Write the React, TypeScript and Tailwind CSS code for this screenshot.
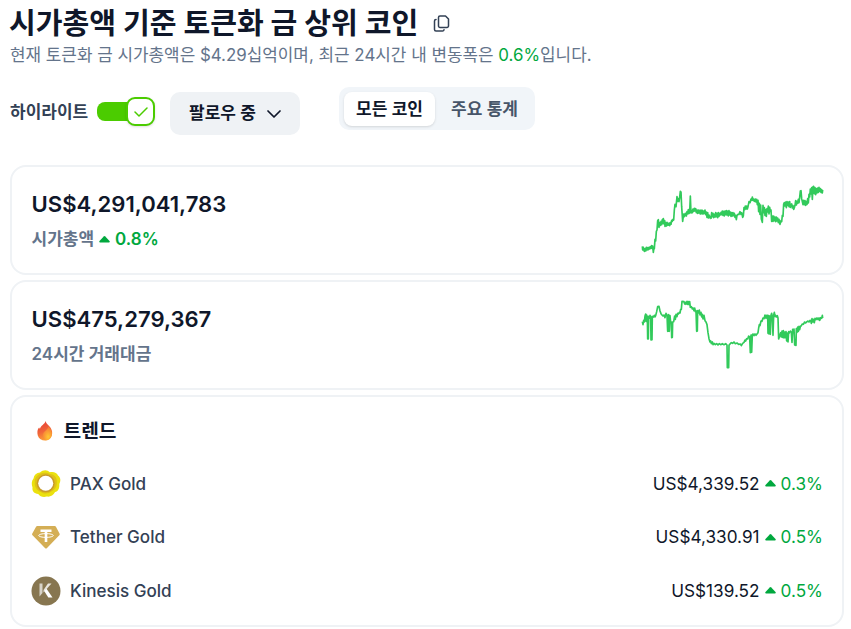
import { ReactNode } from 'react';

const MARKET_CAP_POINTS =
  '37,259 38,270 40,262 43,274 45,266 47,273 49,262 51,270 53,263 55,269 57,262 59,267 61,260 63,265 65,257 67,266 68,258 70,277 72,262 73,266 75,238 77,243 79,214 81,210 83,182 85,179 87,202 89,188 91,196 93,184 95,194 97,179 98,190 100,176 102,192 104,182 105,199 107,188 109,198 111,187 114,196 117,189 119,197 121,188 123,193 125,181 127,184 129,178 131,180 133,150 135,133 138,140 141,110 143,124 145,116 147,125 149,112 151,94 153,96 155,140 158,184 161,162 163,170 166,160 169,168 171,155 173,162 175,149 177,160 179,158 181,108 183,159 185,152 187,158 189,147 191,154 193,145 195,153 197,146 199,158 201,150 203,160 205,150 207,159 209,151 211,162 213,150 215,161 217,151 219,162 221,153 223,160 225,150 227,164 229,156 231,172 233,158 235,174 237,165 239,173 241,170 243,175 245,158 247,170 249,160 251,173 253,163 255,171 257,158 259,170 261,160 263,173 265,158 267,169 269,160 271,165 273,157 275,164 277,153 279,166 281,154 283,168 285,153 287,164 289,152 291,165 293,153 295,168 297,152 299,165 301,156 303,169 305,158 307,168 309,158 311,167 313,160 315,172 317,166 319,179 321,166 324,163 327,163 330,155 333,163 335,158 338,172 340,168 342,143 344,149 346,138 348,147 350,138 352,147 354,140 357,125 360,128 363,117 365,121 367,111 369,121 371,117 373,124 376,117 378,126 380,118 382,134 384,121 386,155 388,130 390,163 392,135 394,177 397,187 399,136 401,158 403,143 405,166 407,149 409,169 411,146 413,156 415,138 417,162 419,142 421,154 423,150 425,184 427,168 429,184 431,168 433,182 435,171 437,185 439,171 441,183 443,174 445,188 447,178 450,193 453,182 455,185 457,166 459,169 461,132 463,128 465,138 467,126 469,143 471,125 473,136 475,126 477,140 479,125 481,142 483,135 485,132 487,144 489,137 491,148 493,143 495,136 497,122 499,135 501,124 503,130 505,118 507,128 509,112 511,93 513,92 515,116 517,125 519,134 521,121 523,134 525,122 527,136 529,125 531,133 533,116 535,129 537,103 539,111 541,87 543,102 545,83 547,118 549,80 551,79 553,101 555,83 557,104 559,86 561,99 563,84 565,97 567,82 569,94 571,86 573,97 575,89 577,99 578,90';

const VOLUME_POINTS =
  '37,125 39,134 41,121 43,126 45,108 47,102 48,124 50,105 52,111 53,177 55,177 56,109 58,115 60,106 62,110 63,180 66,179 67,109 70,111 73,106 75,111 77,107 80,95 83,80 87,79 90,93 93,101 96,105 99,108 102,105 105,113 108,100 111,105 113,154 115,153 116,104 118,154 120,107 122,128 124,126 125,173 127,172 128,126 131,125 134,108 136,118 138,103 141,110 143,100 145,102 148,97 150,99 152,88 154,88 156,64 162,65 164,72 166,67 168,73 171,64 173,73 175,65 177,74 179,65 181,82 184,80 187,87 189,84 192,92 194,84 196,95 198,92 200,154 202,153 203,92 206,99 208,90 210,105 213,97 215,111 217,103 219,117 222,106 225,122 228,126 231,134 234,158 237,176 240,186 242,183 244,191 247,186 249,194 252,190 256,194 260,191 264,195 268,191 272,194 277,191 282,194 287,191 291,195 292,263 296,263 297,196 300,192 304,188 308,190 312,186 316,191 321,189 326,193 331,192 334,197 338,190 342,187 345,180 347,183 350,176 353,177 356,168 359,171 361,218 363,165 365,217 367,164 369,162 372,167 375,162 378,166 381,162 384,158 386,144 388,134 390,137 393,123 396,124 399,114 402,116 405,105 408,115 410,106 413,106 414,160 416,107 417,162 419,108 421,163 423,106 425,100 427,112 429,166 431,105 433,97 435,109 437,106 439,111 442,107 444,114 446,177 449,167 452,158 454,171 456,153 458,172 460,152 462,174 464,156 466,173 468,155 470,183 472,159 474,186 476,155 478,159 481,153 484,157 486,187 488,148 490,158 492,147 494,195 498,196 499,146 501,157 503,141 505,154 507,139 509,149 511,140 514,137 517,132 520,133 524,126 527,129 531,125 534,123 537,126 540,121 542,122 544,130 546,116 548,126 550,118 553,128 555,115 558,119 561,114 564,119 567,114 569,121 572,113 575,115 577,106 578,114';

function Sparkline({ points }: { points: string }) {
  return (
    <svg className="h-[70px] w-[181px] shrink-0 overflow-visible" viewBox="36 60 543 210" fill="none">
      <polyline points={points} stroke="#32ca5b" strokeWidth="5" strokeLinejoin="round" />
    </svg>
  );
}

function CaretUp() {
  return (
    <svg className="h-[7px] w-[11px] shrink-0" viewBox="0 0 11 7" fill="#00a83e">
      <path d="M4.7.4a1.2 1.2 0 0 1 1.6 0l4.2 4.5c.6.7.3 1.6-.6 1.6H1.1C.2 6.5-.1 5.6.5 4.9z" />
    </svg>
  );
}

function FlameIcon() {
  return (
    <svg className="h-5 w-4" viewBox="0 0 16 20">
      <defs>
        <linearGradient id="flame" x1="0" y1="0" x2=".3" y2="1">
          <stop offset="0" stopColor="#e43b36" />
          <stop offset=".6" stopColor="#f0643a" />
          <stop offset="1" stopColor="#fb9c35" />
        </linearGradient>
        <radialGradient id="flameCore" cx=".6" cy=".75" r=".65">
          <stop offset="0" stopColor="#ffc832" />
          <stop offset="1" stopColor="#f77d36" />
        </radialGradient>
      </defs>
      <path d="M8.600 0c.5 3 3.200 4 5 6.800 1.600 2.500 2 5 1.200 7.600C13.800 17.700 11.300 19.500 8 19.500S1.800 17.700.8 14.400C0 11.500.3 8.300 2.100 6.500c.2.600.5 1 .9 1.300C3.500 4.800 7.800 3.200 8.600 0z" fill="url(#flame)" />
      <path d="M11.500 5.500c-.5 3-4.100 4.300-5.500 7.300-1.100 2.400-.1 5.500 2.500 6.500 3.300 0 5.700-2 6.300-5 .5-3.300-1.200-6.800-3.300-8.800z" fill="url(#flameCore)" />
    </svg>
  );
}

function PaxLogo() {
  return (
    <svg className="size-[30px]" viewBox="0 0 30 30">
      <path d="M9 3.500C12 .6 16.500.6 18.800 3.300c3.500-1 7.200.3 8.200 3.300 2.700 1.900 3 5.200 1.300 8.300.3 4.800-1.200 7.200-4.200 8.200-1.900 3.600-5 5-8.300 4.500-3.600 1.200-6.800 0-8.600-2.600C3.200 24.500.9 22 1.500 18.400.4 15.200.4 12.300 2.500 9.500 3 5.800 5.500 3.800 9 3.500z" fill="#ebe10e" />
      <path d="M7.500 5.700c3.500-2.500 8-2.600 11.500-.6 4.500.5 7 3.500 6.800 7.500.5 4.300-1.300 7.900-5.100 9.700-3.500 2.600-7.500 3-10.800.6-4-1.300-6.700-5.500-6.100-9.500C3.300 10 4.900 7.500 7.500 5.700z" fill="#dfc216" />
      <circle cx="14.700" cy="14.300" r="9" fill="#c99b2b" />
      <circle cx="14.700" cy="14.300" r="7.500" fill="#fff" />
    </svg>
  );
}

function TetherLogo() {
  return (
    <svg className="size-[30px]" viewBox="0 0 30 30">
      <path d="M6.300 4h17.400c.5 0 .8.200 1.100.600l3.700 7c.4.700.3 1.200-.2 1.700L15.800 26.200c-.5.500-1.100.500-1.600 0L1.500 13.300c-.5-.5-.6-1-.2-1.700l3.900-7c.3-.4.600-.6 1.100-.6z" fill="#d4ae55" />
      <path d="M9.500 7.500h11v2.400h-4.200v10.200h-2.600V9.900H9.500z" fill="#fff" />
      <ellipse cx="15" cy="13.500" rx="7.300" ry="1.900" fill="none" stroke="#fff" strokeWidth="1" />
    </svg>
  );
}

function KinesisLogo() {
  return (
    <svg className="size-[30px]" viewBox="0 0 30 30">
      <circle cx="15" cy="15" r="14.500" fill="#877650" />
      <path d="M8.500 7.500h3V17l-3 3.500z" fill="#d8d3c8" />
      <path d="M17 7.500h3.500L12.500 16.500v-2.500z" fill="#e8e5de" />
      <path d="M13.200 15l2.300-2.200L21.500 21.500h-4.200z" fill="#fff" />
    </svg>
  );
}

function Card({ children, className }: { children: ReactNode; className: string }) {
  return <section className={`rounded-2xl border-2 border-[#eff2f5] pr-[19px] pl-[19.500px] ${className}`}>{children}</section>;
}

const coins = [
  { name: 'PAX Gold', logo: <PaxLogo />, price: 'US$4,339.52', change: '0.3%' },
  { name: 'Tether Gold', logo: <TetherLogo />, price: 'US$4,330.91', change: '0.5%' },
  { name: 'Kinesis Gold', logo: <KinesisLogo />, price: 'US$139.52', change: '0.5%' },
];

export default function App() {
  return (
    <main className="h-[629px] w-[851px] overflow-hidden bg-white pl-[10px] pr-[7px] font-['Inter','Noto_Sans_CJK_KR',sans-serif] text-[#0f172a]">
      <header className="h-[87px] pt-[6px]">
        <div className="flex h-9 items-center">
          <h1 className="-ml-px whitespace-nowrap text-[29.100px] leading-9 font-bold">시가총액 기준 토큰화 금 상위 코인</h1>
          <svg className="mb-[2px] ml-[15px] size-[17px]" viewBox="0 0 17 17" fill="none" stroke="#334155" strokeWidth="1.500" strokeLinejoin="round" strokeLinecap="round">
            <path d="M7 1h5.500L15.500 4v7a1.500 1.500 0 0 1-1.500 1.500H7A1.500 1.500 0 0 1 5.500 11V2.500A1.500 1.500 0 0 1 7 1z" />
            <path d="M3 4.500A1.500 1.500 0 0 0 1.500 6v8.500A1.500 1.500 0 0 0 3 16h6.500a1.500 1.500 0 0 0 1.500-1.200" />
          </svg>
        </div>
        <p className="whitespace-nowrap text-[16.900px] leading-[27px] text-[#64748b]">
          현재 토큰화 금 시가총액은 $4.29십억이며, 최근 24시간 내 변동폭은 <span className="text-[#00a83e]">0.6%</span>입니다.
        </p>
      </header>

      <div className="flex h-[78px] items-start">
        <div className="flex h-[49px] items-center">
          <span className="w-[78px] pt-[3px] whitespace-nowrap text-[17px] font-semibold text-[#334155]">하이라이트</span>
          <div className="ml-[9px] flex h-[19px] w-[58px] items-center justify-end rounded-lg bg-[#4bcc00]">
            <div className="flex size-[29px] shrink-0 items-center justify-center rounded-[9px] border-2 border-[#4bcc00] bg-white shadow">
              <svg className="h-[10px] w-[14px]" viewBox="0 0 14 10" fill="none" stroke="#4bcc00" strokeWidth="1.500" strokeLinecap="round" strokeLinejoin="round">
                <path d="M1 5l4 4 8-8" />
              </svg>
            </div>
          </div>
        </div>
        <button className="mt-[5px] ml-[15px] flex h-[43px] w-[130px] items-center rounded-[10px] bg-[#eff2f5] pl-[19px] text-[17px] font-semibold whitespace-nowrap">
          팔로우 중
          <svg className="mt-px ml-[11px] h-2 w-[14px]" viewBox="0 0 14 8" fill="none" stroke="#0f172a" strokeWidth="1.700" strokeLinecap="round" strokeLinejoin="round">
            <path d="M1 1l6 6 6-6" />
          </svg>
        </button>
        <div className="ml-[39px] flex h-[43px] w-[196px] rounded-[10px] bg-[#f1f5f9] p-[5px] text-[17px] font-semibold">
          <button className="h-[34px] w-[91px] rounded-lg bg-white pt-px whitespace-nowrap shadow">모든 코인</button>
          <button className="h-[34px] flex-1 pt-px pl-1 whitespace-nowrap text-[#475569]">주요 통계</button>
        </div>
      </div>

      <div className="flex flex-col gap-[5px]">
        <Card className="flex h-[110px] items-start justify-between pt-[13px]">
          <div className="pt-[7px]">
            <div className="text-[22.100px] leading-[34px] font-semibold">US$4,291,041,783</div>
            <div className="mt-[6px] flex items-center gap-[5px] text-[17px] leading-6 font-semibold text-[#64748b]">
              시가총액 <CaretUp /> <span className="text-[#00a83e]">0.8%</span>
            </div>
          </div>
          <Sparkline points={MARKET_CAP_POINTS} />
        </Card>
        <Card className="flex h-[110px] items-start justify-between pt-[18px]">
          <div className="pt-[2px]">
            <div className="text-[22.100px] leading-[34px] font-semibold">US$475,279,367</div>
            <div className="mt-[6px] text-[17px] leading-6 font-semibold text-[#64748b]">24시간 거래대금</div>
          </div>
          <Sparkline points={VOLUME_POINTS} />
        </Card>
        <Card className="h-[232px] pt-[20px]">
          <div className="flex h-[28px] items-center pl-[5px]">
            <FlameIcon />
            <h2 className="ml-[11px] text-[19.200px] font-semibold">트렌드</h2>
          </div>
          <div className="mt-[12px]">
            {coins.map((coin) => (
              <div key={coin.name} className="flex h-[53.500px] items-center text-[17.200px]">
                <div className="-ml-[1px]">{coin.logo}</div>
                <span className="ml-[9.500px] text-[17.070px] font-medium text-[#334155]">{coin.name}</span>
                <span className="ml-auto">{coin.price}</span>
                <span className="ml-[5px]"><CaretUp /></span>
                <span className="ml-[5px] text-[#00a83e]">{coin.change}</span>
              </div>
            ))}
          </div>
        </Card>
      </div>
    </main>
  );
}
